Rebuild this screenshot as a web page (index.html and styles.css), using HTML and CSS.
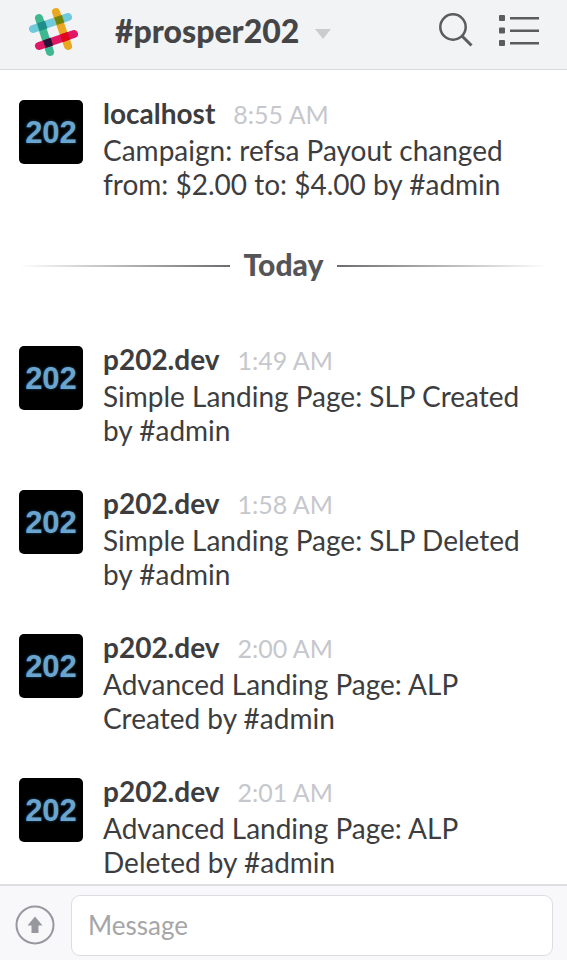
FILE: index.html
```html
<!DOCTYPE html>
<html lang="en">
<head>
<meta charset="utf-8">
<meta name="viewport" content="width=device-width, initial-scale=1">
<title>#prosper202</title>
<link rel="stylesheet" href="styles.css">
</head>
<body>
<header class="topbar">
  <a class="logo" href="#" aria-label="Home">
    <svg width="52" height="52" viewBox="0 0 52 52" fill="none" stroke-width="8" stroke-linecap="round">
      <path d="M7 24L42 12" stroke="#6fcadc"/>
      <path d="M13 13L24 47" stroke="#3eb890"/>
      <path d="M30 7L42 41" stroke="#e9a820"/>
      <path d="M13 41L48 29" stroke="#e01765"/>
      <path d="M11.300 18.300l7.600-2.600 2.500 7.600-7.600 2.600z" fill="#1d8e8b"/>
      <path d="M28.200 12.500l7.600-2.600 2.600 7.600-7.600 2.600z" fill="#71840c"/>
      <path d="M17 35.400l7.600-2.600 2.500 7.600-7.600 2.600z" fill="#2a1237"/>
      <path d="M34 29.600l7.600-2.600 2.600 7.600-7.600 2.600z" fill="#df0919"/>
    </svg>
  </a>
  <button class="channel" type="button">#prosper202
    <svg width="16" height="10" viewBox="0 0 16 10" aria-hidden="true"><path d="M0 0h16L8 10z" fill="#cbccce"/></svg>
  </button>
  <button class="tool" type="button" aria-label="Search">
    <svg width="36" height="36" viewBox="0 0 36 36" fill="none" stroke="#5c5c5f" stroke-width="2.5"><circle cx="14" cy="14" r="12.7"/><path d="M23 23l9.500 9.500" stroke-width="3"/></svg>
  </button>
  <button class="tool" type="button" aria-label="More">
    <svg width="40" height="32" viewBox="0 0 40 32" fill="#5c5c5f"><rect y="0" width="6" height="6" rx="1"/><rect y="12.500" width="6" height="6" rx="1"/><rect y="25" width="6" height="6" rx="1"/><path d="M11 2h29v2.500H11zM11 14.500h29V17H11zM11 27h29v2.500H11z"/></svg>
  </button>
</header>
<main class="feed">
  <article class="message">
    <div class="avatar">202</div>
    <div class="body">
      <div class="meta"><span class="name">localhost</span><time class="time">8:55 AM</time></div>
      <p class="text">Campaign: refsa Payout changed from: $2.00 to: $4.00 by #admin</p>
    </div>
  </article>
  <h2 class="day">Today</h2>
  <article class="message">
    <div class="avatar">202</div>
    <div class="body">
      <div class="meta"><span class="name">p202.dev</span><time class="time">1:49 AM</time></div>
      <p class="text">Simple Landing Page: SLP Created by #admin</p>
    </div>
  </article>
  <article class="message">
    <div class="avatar">202</div>
    <div class="body">
      <div class="meta"><span class="name">p202.dev</span><time class="time">1:58 AM</time></div>
      <p class="text">Simple Landing Page: SLP Deleted by #admin</p>
    </div>
  </article>
  <article class="message">
    <div class="avatar">202</div>
    <div class="body">
      <div class="meta"><span class="name">p202.dev</span><time class="time">2:00 AM</time></div>
      <p class="text">Advanced Landing Page: ALP Created by #admin</p>
    </div>
  </article>
  <article class="message">
    <div class="avatar">202</div>
    <div class="body">
      <div class="meta"><span class="name">p202.dev</span><time class="time">2:01 AM</time></div>
      <p class="text">Advanced Landing Page: ALP Deleted by #admin</p>
    </div>
  </article>
</main>
<form class="composer">
  <button class="upload" type="button" aria-label="Upload">
    <svg width="40" height="40" viewBox="0 0 40 40"><circle cx="20" cy="20" r="18.500" fill="none" stroke="#97989f" stroke-width="2"/><path d="M20 11.500l7.500 9h-4v7.500h-7v-7.500h-4z" fill="#97989f"/></svg>
  </button>
  <input class="field" type="text" placeholder="Message" aria-label="Message">
</form>
</body>
</html>
```

FILE: styles.css
```css
* {
  box-sizing: border-box;
}

body {
  margin: 0;
  min-height: 100vh;
  display: flex;
  flex-direction: column;
  background: #fff;
  color: #3d3d40;
  font-family: Lato, "Liberation Sans", sans-serif;
  font-size: 28px;
  line-height: 34px;
}

button {
  padding: 0;
  border: 0;
  background: none;
  color: inherit;
  font: inherit;
}

svg {
  display: block;
}

.topbar {
  display: flex;
  align-items: center;
  height: 70px;
  padding: 0 28px 8px 26px;
  border-bottom: 1px solid #d8d9db;
  background: #f2f3f5;
}

.channel {
  display: flex;
  align-items: center;
  gap: 16px;
  margin: 0 auto 0 37px;
  color: #454547;
  font-size: 32px;
  font-weight: 900;
}

.channel svg {
  margin-top: 6px;
}

.tool {
  margin-left: 24px;
}

.feed {
  flex: 1;
  padding: 28px 19px 0;
}

.message {
  display: flex;
  gap: 20px;
  margin-bottom: 41px;
}

.message:last-child {
  margin-bottom: 0;
}

.avatar {
  flex: none;
  width: 64px;
  height: 64px;
  margin-top: 2px;
  border-radius: 5px;
  background: #000;
  color: #6ba5cd;
  font-family: "Liberation Sans", sans-serif;
  font-size: 31px;
  font-weight: 700;
  line-height: 66px;
  text-align: center;
  text-shadow: 0 0 3px #24506f;
}

.meta {
  display: flex;
  align-items: baseline;
  gap: 18px;
  height: 35px;
  line-height: 30px;
}

.name {
  font-weight: 700;
}

.time {
  color: #c6c7cc;
  font-size: 25px;
}

.text {
  margin: 0;
}

.day {
  display: flex;
  align-items: center;
  gap: 14px;
  margin: 46px 0 63px;
  color: #555558;
  font-size: 30px;
  font-weight: 900;
}

.day::before,
.day::after {
  content: "";
  flex: 1;
  height: 2px;
  margin-top: 4px;
  background: linear-gradient(to right, #fff, #6c6c70);
}

.day::after {
  background: linear-gradient(to left, #fff, #6c6c70);
}

.composer {
  display: flex;
  align-items: center;
  gap: 16px;
  height: 76px;
  padding: 4px 14px 0 15px;
  border-top: 2px solid #dedfe1;
  background: #f8f8fb;
}

.field {
  flex: 1;
  min-width: 0;
  height: 61px;
  padding: 0 16px;
  border: 1px solid #dcdde0;
  border-radius: 9px;
  background: #fff;
  color: inherit;
  font: inherit;
  font-size: 26px;
}

.field::placeholder {
  color: #a6a6a8;
  opacity: 1;
}
```
